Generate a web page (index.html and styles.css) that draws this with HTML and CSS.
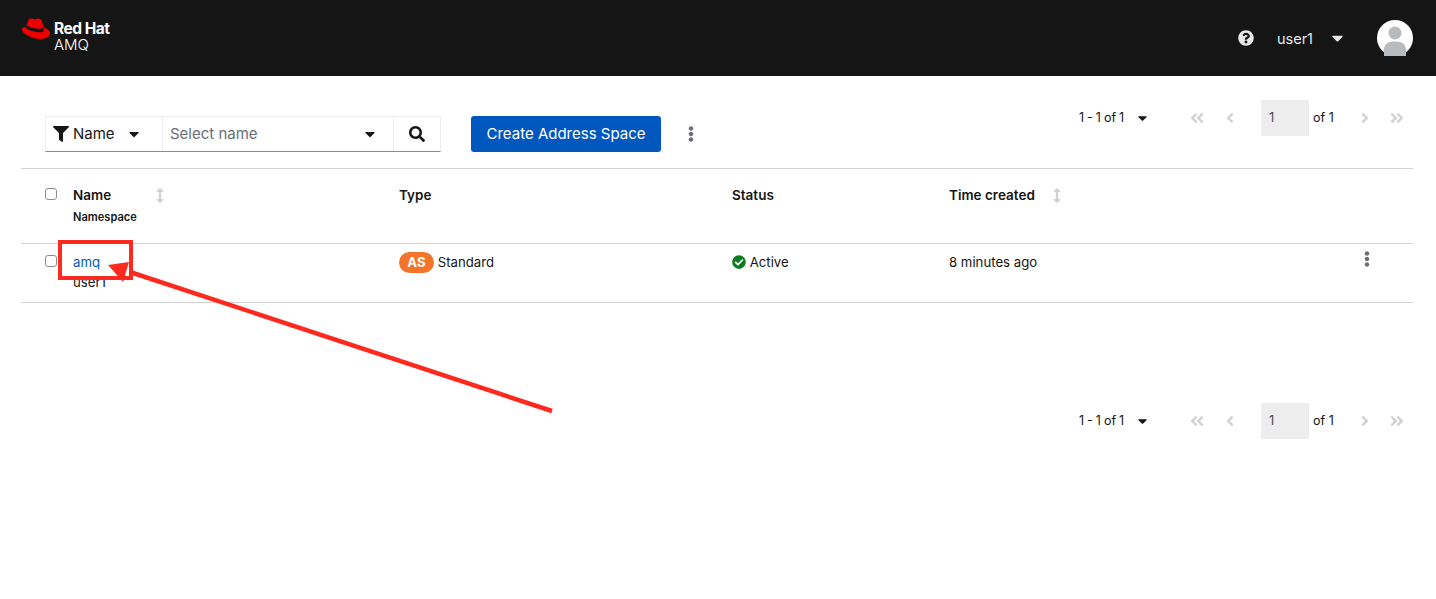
FILE: index.html
```html
<!DOCTYPE html>
<html lang="en">
<head>
    <meta charset="UTF-8">
    <title>AMQ Console</title>
    <link rel="stylesheet" href="styles.css">
</head>
<body>
    <!-- Shared icons -->
    <svg class="icon-defs" aria-hidden="true">
        <symbol id="i-caret" viewBox="0 0 320 512"><path d="M31.3 192h257.3c17.8 0 26.7 21.5 14.1 34.1L174.1 354.8c-7.8 7.8-20.5 7.8-28.3 0L17.2 226.1C4.6 213.5 13.5 192 31.3 192z"/></symbol>
        <symbol id="i-filter" viewBox="0 0 512 512"><path d="M487.976 0H24.028C2.71 0-8.047 25.866 7.058 40.971L192 225.941V432c0 7.831 3.821 15.17 10.237 19.662l80 55.98C298.02 518.69 320 507.493 320 487.98V225.941l184.947-184.97C520.021 25.896 509.338 0 487.976 0z"/></symbol>
        <symbol id="i-search" viewBox="0 0 512 512"><path d="M505 442.7L405.3 343c-4.5-4.5-10.6-7-17-7H372c27.6-35.3 44-79.7 44-128C416 93.1 322.9 0 208 0S0 93.1 0 208s93.1 208 208 208c48.3 0 92.7-16.4 128-44v16.3c0 6.4 2.5 12.5 7 17l99.7 99.7c9.4 9.4 24.6 9.4 33.9 0l28.3-28.3c9.4-9.4 9.4-24.6.1-34zM208 336c-70.7 0-128-57.2-128-128 0-70.7 57.2-128 128-128 70.7 0 128 57.2 128 128 0 70.7-57.2 128-128 128z"/></symbol>
        <symbol id="i-question" viewBox="0 0 512 512"><path d="M504 256c0 136.997-111.043 248-248 248S8 392.997 8 256C8 119.083 119.043 8 256 8s248 111.083 248 248zM262.655 90c-54.497 0-89.255 22.957-116.549 63.758-3.536 5.286-2.353 12.415 2.715 16.258l34.699 26.31c5.205 3.947 12.621 3.008 16.665-2.122 17.864-22.658 30.113-35.797 57.303-35.797 20.429 0 45.698 13.148 45.698 32.958 0 14.976-12.363 22.667-32.534 33.976C247.128 238.528 216 254.941 216 296v4c0 6.627 5.373 12 12 12h56c6.627 0 12-5.373 12-12v-1.333c0-28.462 83.186-29.647 83.186-106.667 0-58.002-60.165-102-116.531-102zM256 338c-25.365 0-46 20.635-46 46 0 25.364 20.635 46 46 46s46-20.636 46-46c0-25.365-20.635-46-46-46z"/></symbol>
        <symbol id="i-check" viewBox="0 0 512 512"><path d="M504 256c0 136.967-111.033 248-248 248S8 392.967 8 256 119.033 8 256 8s248 111.033 248 248zM227.314 387.314l184-184c6.248-6.248 6.248-16.379 0-22.627l-22.627-22.627c-6.248-6.249-16.379-6.249-22.628 0L216 308.118l-70.059-70.059c-6.248-6.248-16.379-6.248-22.628 0l-22.627 22.627c-6.248 6.248-6.248 16.379 0 22.627l104 104c6.249 6.25 16.379 6.25 22.628.001z"/></symbol>
        <symbol id="i-kebab" viewBox="0 0 192 512"><path d="M96 184c39.8 0 72 32.2 72 72s-32.2 72-72 72-72-32.2-72-72 32.2-72 72-72zM24 80c0 39.8 32.2 72 72 72s72-32.2 72-72S135.8 8 96 8 24 40.2 24 80zm0 352c0 39.8 32.2 72 72 72s72-32.2 72-72-32.2-72-72-72-72 32.2-72 72z"/></symbol>
        <symbol id="i-left" viewBox="0 0 256 512"><path d="M31.7 239l136-136c9.4-9.4 24.6-9.4 33.9 0l22.6 22.6c9.4 9.4 9.4 24.6 0 33.9L127.9 256l96.4 96.4c9.4 9.4 9.4 24.6 0 33.9L201.7 409c-9.4 9.4-24.6 9.4-33.9 0l-136-136c-9.5-9.4-9.5-24.6-.1-34z"/></symbol>
        <symbol id="i-right" viewBox="0 0 256 512"><path d="M224.3 273l-136 136c-9.4 9.4-24.6 9.4-33.9 0l-22.6-22.6c-9.4-9.4-9.4-24.6 0-33.9l96.4-96.4-96.4-96.4c-9.4-9.4-9.4-24.6 0-33.9L54.3 103c9.4-9.4 24.6-9.4 33.9 0l136 136c9.5 9.4 9.5 24.6.1 34z"/></symbol>
        <symbol id="i-first" viewBox="0 0 448 512"><path d="M223.7 239l136-136c9.4-9.4 24.6-9.4 33.9 0l22.6 22.6c9.4 9.4 9.4 24.6 0 33.9L319.9 256l96.4 96.4c9.4 9.4 9.4 24.6 0 33.9L393.7 409c-9.4 9.4-24.6 9.4-33.9 0l-136-136c-9.5-9.4-9.5-24.6-.1-34zm-192 34l136 136c9.4 9.4 24.6 9.4 33.9 0l22.6-22.6c9.4-9.4 9.4-24.6 0-33.9L127.9 256l96.4-96.4c9.4-9.4 9.4-24.6 0-33.9L201.7 103c-9.4-9.4-24.6-9.4-33.9 0l-136 136c-9.5 9.4-9.5 24.6-.1 34z"/></symbol>
        <symbol id="i-last" viewBox="0 0 448 512"><path d="M224.3 273l-136 136c-9.4 9.4-24.6 9.4-33.9 0l-22.6-22.6c-9.4-9.4-9.4-24.6 0-33.9l96.4-96.4-96.4-96.4c-9.4-9.4-9.4-24.6 0-33.9L54.3 103c9.4-9.4 24.6-9.4 33.9 0l136 136c9.5 9.4 9.5 24.6.1 34zm192-34l-136-136c-9.4-9.4-24.6-9.4-33.9 0l-22.6 22.6c-9.4 9.4-9.4 24.6 0 33.9l96.4 96.4-96.4 96.4c-9.4 9.4-9.4 24.6 0 33.9l22.6 22.6c9.4 9.4 24.6 9.4 33.9 0l136-136c9.4-9.2 9.4-24.4 0-33.8z"/></symbol>
        <symbol id="i-sort" viewBox="0 0 256 512"><path d="M214.059 377.941H168V134.059h46.059c21.382 0 32.09-25.851 16.971-40.971L144.971 7.029c-9.373-9.373-24.568-9.373-33.941 0L24.971 93.088c-15.119 15.119-4.411 40.971 16.971 40.971H88v243.882H41.941c-21.382 0-32.09 25.851-16.971 40.971l86.059 86.059c9.373 9.373 24.568 9.373 33.941 0l86.059-86.059c15.12-15.119 4.412-40.971-16.97-40.971z"/></symbol>
    </svg>

    <header class="masthead">
        <div class="brand">
            <svg class="brand-hat" viewBox="0 0 30 22">
                <path fill="#ee0000" d="M7.500 1.800C8.300 .5 9.800 .2 11.500 .7c1.600 .5 2.700 .6 4.300 .1 2.200-.6 4.200 0 4.900 2l2.200 6.700c3 1.200 6.100 3 6.100 5.800 0 3.400-3.700 5.700-9 5.700C12 21 1.300 15.800 .9 11.700c-.2-1.500 1.100-2.500 4.100-2.700z"/>
                <path fill="#151515" d="M5 8.700c-.3 1.100 .5 2.200 2.500 3.100 3.500 1.600 9 2.600 12.500 2.400 2.300-.1 3.100-1 2.700-2.700l-.7-2.200c-.4 1-1.700 1.500-4 1.500-4.200 0-8.300-1.100-10.800-2.500-.8-.5-1.500-.6-1.700-.3z"/>
            </svg>
            <div class="brand-text">
                <span class="brand-name">Red Hat</span>
                <span class="brand-product">AMQ</span>
            </div>
        </div>
        <div class="masthead-tools">
            <svg class="help-icon"><use href="#i-question"/></svg>
            <span class="user-name">user1</span>
            <svg class="user-caret"><use href="#i-caret"/></svg>
            <svg class="avatar" viewBox="0 0 36 36">
                <circle cx="18" cy="18" r="18" fill="#fff"/>
                <circle cx="18" cy="13" r="6.500" fill="#b8bbbe"/>
                <path fill="#b8bbbe" d="M7 36v-6c0-6 4-8.500 11-8.500s11 2.500 11 8.500v6z"/>
            </svg>
        </div>
    </header>

    <main class="content">
        <div class="toolbar">
            <div class="filter-group">
                <div class="filter-type">
                    <svg class="filter-icon"><use href="#i-filter"/></svg>
                    <span>Name</span>
                    <svg class="caret"><use href="#i-caret"/></svg>
                </div>
                <div class="filter-select">
                    <span>Select name</span>
                    <svg class="caret"><use href="#i-caret"/></svg>
                </div>
                <div class="filter-search">
                    <svg class="search-icon"><use href="#i-search"/></svg>
                </div>
            </div>
            <button class="primary-btn">Create Address Space</button>
            <svg class="toolbar-kebab"><use href="#i-kebab"/></svg>
            <div class="pagination">
                <span class="page-count">1 - 1 of 1</span>
                <svg class="caret page-caret"><use href="#i-caret"/></svg>
                <svg class="page-first"><use href="#i-first"/></svg>
                <svg class="page-prev"><use href="#i-left"/></svg>
                <span class="page-input">1</span>
                <span class="page-of">of 1</span>
                <svg class="page-next"><use href="#i-right"/></svg>
                <svg class="page-last"><use href="#i-last"/></svg>
            </div>
        </div>

        <table class="spaces-table">
            <thead>
                <tr>
                    <th class="col-check"><span class="checkbox"></span></th>
                    <th class="col-name">
                        <div class="name-head"><span>Name</span><svg class="sort-icon"><use href="#i-sort"/></svg></div>
                        <div class="sub-head">Namespace</div>
                    </th>
                    <th class="col-type">Type</th>
                    <th class="col-status">Status</th>
                    <th class="col-time">
                        <div class="time-head"><span>Time created</span><svg class="sort-icon"><use href="#i-sort"/></svg></div>
                    </th>
                    <th class="col-action"></th>
                </tr>
            </thead>
            <tbody>
                <tr>
                    <td><span class="checkbox"></span></td>
                    <td><a class="row-link" href="#">amq</a><div>user1</div></td>
                    <td><span class="type-badge">AS</span> Standard</td>
                    <td><svg class="status-icon"><use href="#i-check"/></svg> Active</td>
                    <td>8 minutes ago</td>
                    <td class="row-action"><svg class="row-kebab"><use href="#i-kebab"/></svg></td>
                </tr>
            </tbody>
        </table>

        <div class="pagination bottom-pagination">
            <span class="page-count">1 - 1 of 1</span>
            <svg class="caret page-caret"><use href="#i-caret"/></svg>
            <svg class="page-first"><use href="#i-first"/></svg>
            <svg class="page-prev"><use href="#i-left"/></svg>
            <span class="page-input">1</span>
            <span class="page-of">of 1</span>
            <svg class="page-next"><use href="#i-right"/></svg>
            <svg class="page-last"><use href="#i-last"/></svg>
        </div>
    </main>

    <!-- Red markup drawn on top of the screenshot -->
    <svg class="annotation" viewBox="0 0 1436 599">
        <rect x="60" y="242" width="71" height="36" fill="none" stroke="#ff2a1f" stroke-width="4"/>
        <path d="M130 272L552 411" stroke="#ff2a1f" stroke-width="4.500" fill="none"/>
        <path d="M108 265L129 262L123 282z" fill="#ff2a1f"/>
    </svg>
</body>
</html>
```

FILE: styles.css
```css
* {
    box-sizing: border-box;
}
html, body {
    margin: 0;
    height: 599px;
    overflow: hidden;
}
body {
    position: relative;
    font-family: 'Inter', 'Liberation Sans', sans-serif;
    font-size: 13px;
    color: #151515;
    background-color: #fff;
}
svg {
    display: block;
    fill: currentColor;
    flex: none;
}
.icon-defs {
    position: absolute;
    width: 0;
    height: 0;
}

/* Masthead */
.masthead {
    height: 76px;
    background-color: #151515;
    color: #fff;
    display: flex;
    justify-content: space-between;
    align-items: center;
    padding: 0 23px 0 21px;
}
.brand {
    display: flex;
    align-items: flex-start;
    margin-top: -6px;
}
.brand-hat {
    width: 30px;
    height: 22px;
    margin-top: 0;
}
.brand-text {
    margin: 3px 0 0 3px;
    display: flex;
    flex-direction: column;
    line-height: 16px;
}
.brand-name {
    font-size: 15.500px;
    font-weight: 700;
    letter-spacing: -0.5px;
}
.brand-product {
    font-size: 15px;
    font-weight: 300;
}
.masthead-tools {
    display: flex;
    align-items: center;
    color: #e8e8e8;
}
.help-icon {
    width: 16px;
    height: 16px;
}
.user-name {
    font-size: 14.500px;
    margin-left: 23px;
}
.user-caret {
    width: 11px;
    height: 18px;
    margin-left: 19px;
}
.avatar {
    width: 36px;
    height: 36px;
    margin-left: 34px;
}

/* Toolbar */
.content {
    padding: 0 23px 0 21px;
}
.toolbar {
    height: 92px;
    padding: 24px 0 0 24px;
    display: flex;
    align-items: flex-start;
    position: relative;
}
.filter-group {
    display: flex;
    height: 36px;
    margin-top: 16px;
    border: 1px solid #ededed;
    border-bottom: 1px solid #8a8d90;
    font-size: 15px;
    line-height: 32px;
}
.filter-type {
    width: 117px;
    display: flex;
    align-items: center;
    padding-left: 7px;
    border-right: 1px solid #ededed;
}
.filter-icon {
    width: 16px;
    height: 16px;
    margin-right: 4px;
}
.caret {
    width: 10px;
    height: 16px;
    color: #151515;
}
.filter-type .caret {
    margin-left: 14px;
}
.filter-select {
    width: 231px;
    display: flex;
    align-items: center;
    justify-content: space-between;
    padding: 0 18px 0 7px;
    color: #6a6e73;
    border-right: 1px solid #ededed;
}
.filter-search {
    width: 46px;
    display: flex;
    align-items: center;
    justify-content: center;
}
.search-icon {
    width: 16px;
    height: 16px;
}
.primary-btn {
    height: 36px;
    width: 190px;
    margin: 16px 0 0 30px;
    padding: 0 0 2px;
    border: none;
    border-radius: 3px;
    background-color: #0058bf;
    color: #fff;
    font-family: inherit;
    font-size: 15px;
}
.toolbar-kebab {
    width: 6px;
    height: 16px;
    margin: 26px 0 0 27px;
    color: #6a6e73;
}

/* Pagination */
.pagination {
    display: flex;
    align-items: center;
    height: 36px;
    margin-left: auto;
    margin-right: 9px;
    color: #d2d2d2;
}
.bottom-pagination {
    margin-top: 100px;
    justify-content: flex-end;
}
.page-count, .page-of {
    color: #151515;
    white-space: nowrap;
    line-height: 34px;
}
.page-count {
    width: 48px;
    font-size: 12.500px;
    word-spacing: -0.5px;
}
.page-caret {
    margin-left: 11px;
    width: 9px;
}
.page-first, .page-last {
    width: 14px;
    height: 16px;
}
.page-first {
    margin-left: 43px;
}
.page-prev, .page-next {
    width: 10px;
    height: 16px;
}
.page-prev {
    margin-left: 21px;
}
.page-input {
    width: 48px;
    height: 36px;
    margin-left: 26px;
    padding-left: 8px;
    line-height: 35px;
    font-size: 13px;
    color: #4f5255;
    background-color: #ededed;
}
.page-of {
    width: 21px;
    margin-left: 4px;
    font-size: 12.500px;
}
.page-next {
    margin-left: 26px;
}
.page-last {
    margin-left: 20px;
}

/* Table */
.spaces-table {
    width: 1392px;
    table-layout: fixed;
    border-collapse: collapse;
    border-top: 1px solid #d2d2d2;
}
.spaces-table th {
    height: 75px;
    padding: 17px 0 0;
    text-align: left;
    vertical-align: top;
    font-size: 13.500px;
    line-height: 18px;
    font-weight: 600;
    border-bottom: 1px solid #d2d2d2;
}
.spaces-table td {
    height: 59px;
    padding: 8px 0 0;
    vertical-align: top;
    font-size: 13.200px;
    line-height: 20px;
    border-bottom: 1px solid #d2d2d2;
}
.col-check {
    width: 52px;
}
.col-name {
    width: 326px;
}
.col-type {
    width: 333px;
}
.col-status {
    width: 217px;
}
.col-time {
    width: 400px;
}
.col-action {
    width: 64px;
}
.checkbox {
    display: block;
    width: 12px;
    height: 12px;
    margin: 2px 0 0 24px;
    border: 1px solid #8a8d90;
    border-radius: 3px;
    background-color: #fff;
}
td .checkbox {
    margin-top: 3px;
}
.name-head, .time-head {
    display: flex;
    align-items: center;
}
.name-head span {
    width: 83px;
}
.time-head span {
    width: 104px;
}
.sort-icon {
    width: 8px;
    height: 15px;
    color: #d2d2d2;
}
.sub-head {
    font-size: 11.100px;
    line-height: 14px;
    margin-top: 6px;
}
.row-link {
    color: #0058bf;
    text-decoration: none;
}
.type-badge {
    display: inline-block;
    width: 35px;
    height: 21px;
    border-radius: 11px;
    text-align: center;
    line-height: 21px;
    font-weight: 700;
    color: #fff;
    background-color: #f4742b;
}
.status-icon {
    display: inline-block;
    width: 14px;
    height: 14px;
    vertical-align: -2px;
    color: #0d7a20;
}
.spaces-table .row-action {
    padding-left: 15px;
}
.row-kebab {
    width: 6px;
    height: 16px;
    margin-top: -1px;
    color: #6a6e73;
}

/* Markup overlay */
.annotation {
    position: absolute;
    top: 0;
    left: 0;
    width: 1436px;
    height: 599px;
    pointer-events: none;
}
```
